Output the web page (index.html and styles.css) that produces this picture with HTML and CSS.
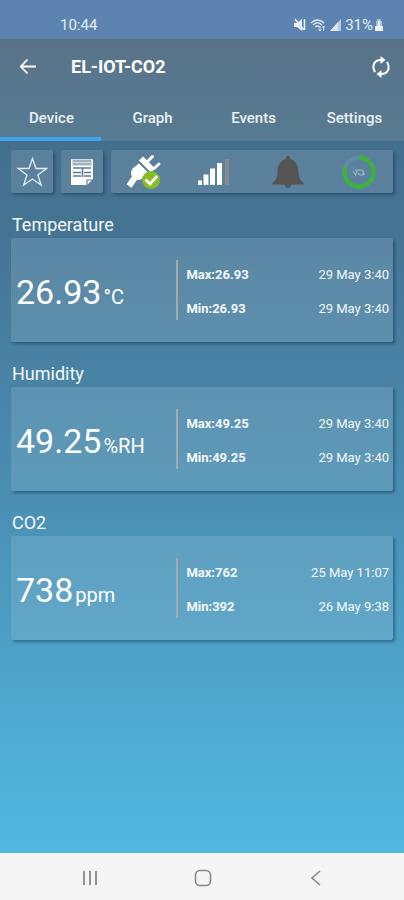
FILE: index.html
```html
<!DOCTYPE html>
<html lang="en">
<head>
<meta charset="utf-8">
<meta name="viewport" content="width=device-width, initial-scale=1">
<title>EL-IOT-CO2</title>
<link rel="stylesheet" href="styles.css">
</head>
<body>
<div class="status">
  <span class="clock">10:44</span>
  <div class="status-icons">
    <svg width="14" height="14" viewBox="0 0 14 14" aria-hidden="true"><path d="M1 5h3l5-4v12L4 9H1z" fill="#e8f0f8"/><path d="M2 1l9 11" stroke="#e8f0f8" stroke-width="1.500"/><path d="M11.500 1v11" stroke="#e8f0f8" stroke-width="1.600"/></svg>
    <svg width="16" height="14" viewBox="0 0 16 14" fill="none" stroke="#dce7f2" stroke-width="1.500" aria-hidden="true"><path d="M1 5c4-4 9-4 13 0M3 7c3-3 6-3 9 0M5.500 9c1-1.500 3-1.500 4 0"/><path d="M10 8v5M8.500 11.500l1.500 1.500 1.500-1.500M13.500 13V8M12 9.500L13.500 8 15 9.500" stroke-width="1"/></svg>
    <svg width="13" height="14" viewBox="0 0 13 14" aria-hidden="true"><path d="M1 13L12 1v12z" fill="#b9ccdf"/><path d="M1 13l8-9v9z" fill="#dce7f2"/></svg>
    <span class="percent">31%</span>
    <svg width="10" height="14" viewBox="0 0 10 14" aria-hidden="true"><path d="M3 1h4v2h1v5H2V3h1z" fill="#a9c0d8"/><path d="M4 3h2v5h3v5H1V8h3z" fill="#eef4fa"/></svg>
  </div>
</div>
<header class="top">
  <div class="appbar">
    <button class="icon-button" type="button" aria-label="Back"><svg width="20" height="20" viewBox="0 0 20 20" fill="none" stroke="#fff" stroke-width="1.800"><path d="M18 9.500H3M9.500 2.500L2.800 9.500l6.700 7"/></svg></button>
    <h1>EL-IOT-CO2</h1>
    <button class="icon-button" type="button" aria-label="Refresh"><svg width="22" height="24" viewBox="0 0 22 24"><path d="M5 17C1.500 11 4 5 11 5M17 7C20.500 13 18 19 11 19" fill="none" stroke="#fff" stroke-width="2"/><path d="M10.500 1l5 4-5 4zM11.500 15l-5 4 5 4z" fill="#fff"/></svg></button>
  </div>
  <nav class="tabs">
    <a class="tab active" href="#device" aria-current="page">Device</a>
    <a class="tab" href="#graph">Graph</a>
    <a class="tab" href="#events">Events</a>
    <a class="tab" href="#settings">Settings</a>
  </nav>
</header>
<main id="device">
  <div class="tools">
    <button class="panel tool" type="button" aria-label="Favourite"><svg width="32" height="32" viewBox="0 0 32 32" fill="none" stroke="#d9eaf8" stroke-width="1.400"><path d="M16.500 2.500l3.500 10h10.500l-8.600 6.500 3.200 10-8.600-6-8.800 6 3.200-10L2.300 12.500H13z"/></svg></button>
    <button class="panel tool" type="button" aria-label="Notes"><svg width="24" height="28" viewBox="0 0 24 28"><path d="M1 2q0-1 1-1h20q1 0 1 1v19l-6 6H2q-1 0-1-1z" fill="#fff"/><path d="M2 1h20v7H2z" fill="#d3dbe2"/><path d="M3 3h18M3 6h18" stroke="#71879a" stroke-width="1.200"/><path d="M3 10h18M3 14.500h8M14 14.500h7M3 18h8M14 18h7M12.500 10v9" stroke="#5d7a91" stroke-width="1.600"/><path d="M17 27v-5h6" fill="none" stroke="#5d7a91" stroke-width="1.200"/></svg></button>
    <div class="panel indicators">
      <svg width="36" height="36" viewBox="0 0 36 36" role="img" aria-label="Connected"><path d="M15 4.500L27 16.500" stroke="#fff" stroke-width="6"/><path d="M10 12L20 22" stroke="#fff" stroke-width="8"/><circle cx="12" cy="19" r="7" fill="#fff"/><path d="M10 22L3 32" stroke="#fff" stroke-width="6"/><path d="M21.500 7.500l5-5M28 14.500l5-4.500" stroke="#fff" stroke-width="3" stroke-linecap="round"/><path d="M11.500 6.500L24 19" stroke="#58799a" stroke-width="1"/><circle cx="25" cy="26" r="9" fill="#87bd24"/><path d="M19.500 25.500l4.500 4.500 7-8" fill="none" stroke="#fff" stroke-width="2.800"/></svg>
      <svg width="32" height="30" viewBox="0 0 32 30" role="img" aria-label="Signal strength"><path d="M0 23.500h4v4.500H0zM5.500 17.500h5V28h-5zM12 11.500h5V28h-5zM19 6h5v22h-5z" fill="#fff"/><path d="M27 2h4v26h-4z" fill="#85888d"/></svg>
      <svg width="32" height="34" viewBox="0 0 32 34" fill="#555" role="img" aria-label="No alarms"><path d="M13.500 4q0-3 2.500-3t2.500 3c6 2 8 7 8 13 0 6 2 8 5 11v1.500H.500V28c3-3 5-5 5-11 0-6 2-11 8-13zM12.500 29h7q-.500 4-3.500 4t-3.500-4z"/></svg>
      <svg width="34" height="34" viewBox="0 0 34 34" fill="none" role="img" aria-label="Battery charge"><circle cx="17" cy="17" r="14.500" stroke="#608ca5" stroke-width="4"/><path d="M17 2.500A14.500 14.500 0 1 1 3.500 11.700" stroke="#3eaf43" stroke-width="4.500"/><path d="M11 16l2.500 4 2-5h5l2 5M13 15h7M16 18l2 2h3v-5" stroke="#9db8ca" stroke-width="1.100"/></svg>
    </div>
  </div>
  <section class="reading">
    <h2>Temperature</h2>
    <div class="panel card">
      <p class="value">26.93<span class="unit">°C</span></p>
      <dl class="range">
        <div class="row"><dt>Max:26.93</dt><dd>29 May 3:40</dd></div>
        <div class="row"><dt>Min:26.93</dt><dd>29 May 3:40</dd></div>
      </dl>
    </div>
  </section>
  <section class="reading">
    <h2>Humidity</h2>
    <div class="panel card">
      <p class="value">49.25<span class="unit">%RH</span></p>
      <dl class="range">
        <div class="row"><dt>Max:49.25</dt><dd>29 May 3:40</dd></div>
        <div class="row"><dt>Min:49.25</dt><dd>29 May 3:40</dd></div>
      </dl>
    </div>
  </section>
  <section class="reading">
    <h2>CO2</h2>
    <div class="panel card">
      <p class="value">738<span class="unit">ppm</span></p>
      <dl class="range">
        <div class="row"><dt>Max:762</dt><dd>25 May 11:07</dd></div>
        <div class="row"><dt>Min:392</dt><dd>26 May 9:38</dd></div>
      </dl>
    </div>
  </section>
</main>
<footer class="system">
  <button type="button" aria-label="Recent apps"><svg width="18" height="18" viewBox="0 0 18 18" stroke="#888" stroke-width="1.800"><path d="M3 2v14M9 2v14M15 2v14"/></svg></button>
  <button type="button" aria-label="Home"><svg width="18" height="18" viewBox="0 0 18 18" fill="none" stroke="#888" stroke-width="1.600"><rect x="1.500" y="1.500" width="15" height="15" rx="4.500"/></svg></button>
  <button type="button" aria-label="Back"><svg width="18" height="18" viewBox="0 0 18 18" fill="none" stroke="#888" stroke-width="1.600"><path d="M13 2L5 9l8 7"/></svg></button>
</footer>
</body>
</html>
```
FILE: styles.css
```css
* {
  box-sizing: border-box;
}

body {
  margin: 0;
  min-height: 100vh;
  display: flex;
  flex-direction: column;
  font-family: Roboto, "Liberation Sans", sans-serif;
  color: #f4f9fd;
}

h1, h2, p, dl, dd {
  margin: 0;
  font-weight: 400;
}

button {
  padding: 0;
  border: 0;
  background: none;
  color: inherit;
  display: flex;
  align-items: center;
  justify-content: center;
}

svg {
  display: block;
  flex: none;
}

.status {
  height: 39px;
  padding: 12px 20px 0 60px;
  display: flex;
  justify-content: space-between;
  align-items: flex-start;
  background: #5d84b0;
  font-size: 15px;
  line-height: 26px;
  color: #e4edf6;
}

.status-icons {
  display: flex;
  align-items: center;
  gap: 3px;
}

.percent {
  margin-right: -2px;
}

.top {
  background: linear-gradient(#59738a, #577b92);
}

.appbar {
  height: 56px;
  padding: 0 12px 0 18px;
  display: flex;
  align-items: center;
}

.appbar h1 {
  flex: 1;
  margin-left: 33px;
  font-size: 18px;
  font-weight: 700;
  line-height: 24px;
  color: #fff;
}

.tabs {
  display: grid;
  grid-template-columns: repeat(4, 1fr);
}

.tab {
  height: 46px;
  padding-left: 2px;
  border-bottom: 4px solid transparent;
  font-size: 15px;
  font-weight: 500;
  line-height: 46px;
  text-align: center;
  text-decoration: none;
  color: #eaf1f6;
}

.tab.active {
  border-color: #3ea5e8;
}

main {
  flex: 1;
  padding: 9px 11px 24px;
  background: linear-gradient(#436f8c, #467595 15%, #4a8fb3 50%, #52b9e2);
}

.panel {
  border-radius: 2px;
  background: rgba(130, 155, 178, 0.38);
  box-shadow: 2px 2px 3px rgba(20, 55, 85, 0.5);
}

.tools {
  display: grid;
  grid-template-columns: 42px 42px 1fr;
  gap: 8px;
}

.tools .panel {
  height: 43px;
}

.indicators {
  display: grid;
  grid-template-columns: 66px 1fr 1fr 68px;
  align-items: center;
  justify-items: center;
}

.reading h2 {
  padding: 19px 1px 1px;
  font-size: 18px;
  line-height: 25px;
}

.card {
  height: 104px;
  padding: 0 4px 0 5px;
  display: grid;
  grid-template-columns: 43% 1fr;
  align-items: center;
  background: rgba(155, 190, 210, 0.25);
}

.value {
  padding-top: 8px;
  font-size: 34px;
  line-height: 44px;
  color: #fff;
}

.unit {
  margin-left: 2px;
  font-size: 20px;
}

.range {
  height: 60px;
  padding: 4px 0 0 8px;
  border-left: 2px solid #a8aaaa;
  display: flex;
  flex-direction: column;
  justify-content: center;
  gap: 14px;
  font-size: 13px;
  line-height: 20px;
}

.row {
  display: flex;
  justify-content: space-between;
}

.row dt {
  font-weight: 700;
}

.system {
  height: 47px;
  padding: 2px 32px 0 34px;
  display: grid;
  grid-template-columns: repeat(3, 1fr);
  background: #f5f5f5;
}
```
